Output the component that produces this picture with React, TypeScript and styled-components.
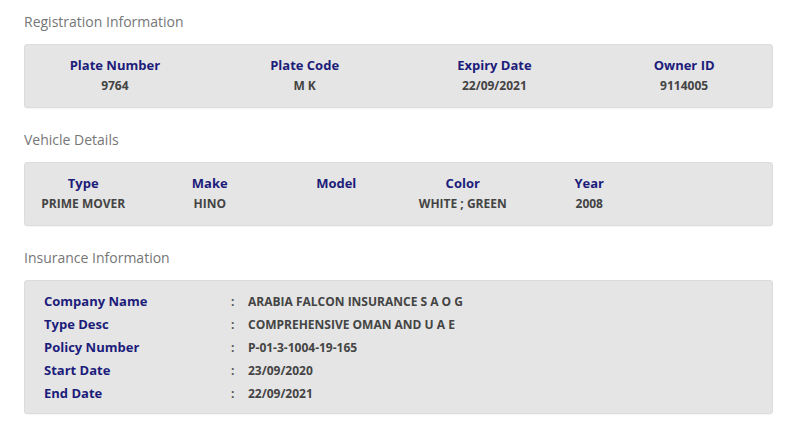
import React from 'react';
import styled, { createGlobalStyle } from 'styled-components';

const GlobalStyle = createGlobalStyle`
  body {
    margin: 0;
    background: #ffffff;
    font-family: "Open Sans", "Noto Sans", sans-serif;
  }
`

const Page = styled.div`
  padding: 12px 20px 16px 24px;
`

const Section = styled.section`
  & + & {
    margin-top: 22px;
  }
`

const Heading = styled.h3`
  margin: 0 0 12px;
  font-size: 14px;
  line-height: 20px;
  font-weight: 400;
  color: #767676;
`

const Panel = styled.div`
  background: #e5e5e5;
  border: 1px solid #dcdcdc;
  border-radius: 3px;
  box-shadow: 0 1px 1px rgba(0, 0, 0, 0.04);
  box-sizing: border-box;
`

const ColumnRow = styled.div<{ $cols: number }>`
  display: grid;
  grid-template-columns: repeat(12, 1fr);
  margin: 0 -7px 0 -5px;
  padding: 10px 0 11px;
  & > div {
    grid-column: span ${p => 12 / p.$cols};
  }
`

const Field = styled.div`
  text-align: center;
`

const Label = styled.div`
  font-size: 13px;
  line-height: 21px;
  font-weight: 700;
  color: #1c1c7a;
`

const Value = styled.div`
  font-size: 12px;
  line-height: 20px;
  font-weight: 700;
  color: #444444;
  min-height: 20px;
`

const InfoList = styled.div`
  display: grid;
  grid-template-columns: 185px 19px 1fr;
  padding: 9px 20px 8px 19px;
`

const InfoLabel = styled.div`
  font-size: 13px;
  line-height: 23px;
  font-weight: 700;
  color: #1c1c7a;
`

const Colon = styled.div`
  font-size: 12px;
  line-height: 23px;
  font-weight: 700;
  color: #555555;
  padding-left: 2px;
`

const InfoValue = styled.div`
  font-size: 12px;
  line-height: 23px;
  font-weight: 700;
  color: #444444;
`

const registration = [
  { label: 'Plate Number', value: '9764' },
  { label: 'Plate Code', value: 'M K' },
  { label: 'Expiry Date', value: '22/09/2021' },
  { label: 'Owner ID', value: '9114005' },
]

const vehicle = [
  { label: 'Type', value: 'PRIME MOVER' },
  { label: 'Make', value: 'HINO' },
  { label: 'Model', value: '' },
  { label: 'Color', value: 'WHITE ; GREEN' },
  { label: 'Year', value: '2008' },
]

const insurance = [
  { label: 'Company Name', value: 'ARABIA FALCON INSURANCE S A O G' },
  { label: 'Type Desc', value: 'COMPREHENSIVE OMAN AND U A E' },
  { label: 'Policy Number', value: 'P-01-3-1004-19-165' },
  { label: 'Start Date', value: '23/09/2020' },
  { label: 'End Date', value: '22/09/2021' },
]

const App: React.FC = () => {
  return (
    <>
      <GlobalStyle />
      <Page>
        <Section>
          <Heading>Registration Information</Heading>
          <Panel>
            <ColumnRow $cols={4}>
              {registration.map(f => (
                <Field key={f.label}>
                  <Label>{f.label}</Label>
                  <Value>{f.value}</Value>
                </Field>
              ))}
            </ColumnRow>
          </Panel>
        </Section>
        <Section>
          <Heading>Vehicle Details</Heading>
          <Panel>
            <ColumnRow $cols={6}>
              {vehicle.map(f => (
                <Field key={f.label}>
                  <Label>{f.label}</Label>
                  <Value>{f.value}</Value>
                </Field>
              ))}
            </ColumnRow>
          </Panel>
        </Section>
        <Section>
          <Heading>Insurance Information</Heading>
          <Panel>
            <InfoList>
              {insurance.map(f => (
                <React.Fragment key={f.label}>
                  <InfoLabel>{f.label}</InfoLabel>
                  <Colon>:</Colon>
                  <InfoValue>{f.value}</InfoValue>
                </React.Fragment>
              ))}
            </InfoList>
          </Panel>
        </Section>
      </Page>
    </>
  )
}

export default App
